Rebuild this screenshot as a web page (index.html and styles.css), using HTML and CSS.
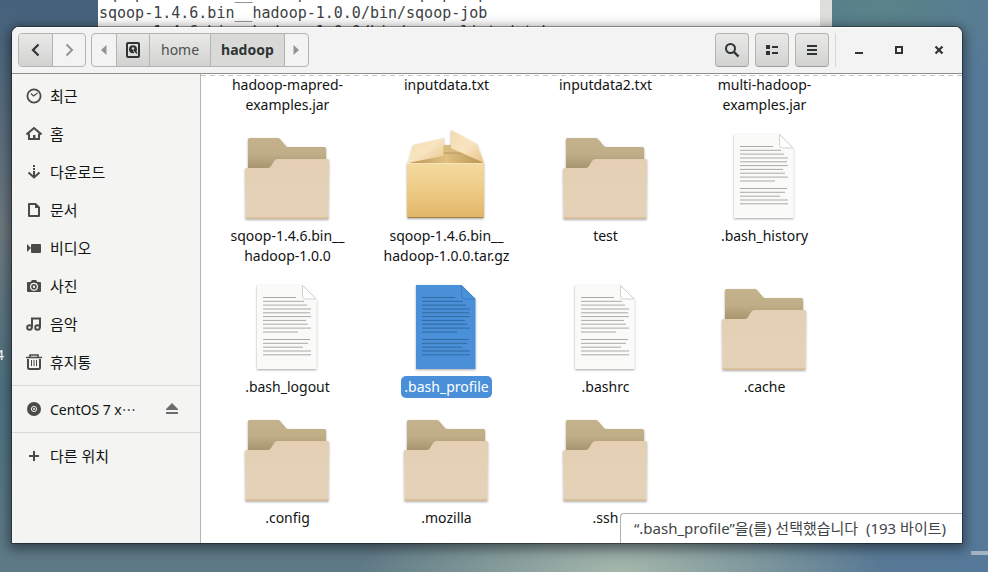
FILE: index.html
```html
<!DOCTYPE html>
<html lang="ko">
<head>
<meta charset="utf-8">
<title>hadoop</title>
<link rel="stylesheet" href="styles.css">
</head>
<body>
<svg class="defs" aria-hidden="true">
  <defs>
    <linearGradient id="back" x1="0" y1="0" x2="0" y2="1"><stop offset="0" stop-color="#c4b28c"/><stop offset=".4" stop-color="#c0ae88"/><stop offset=".8" stop-color="#a5926c"/></linearGradient>
    <linearGradient id="front" x1="0" y1="0" x2="0" y2="1"><stop offset="0" stop-color="#e4cfb4"/><stop offset="1" stop-color="#e4d2b8"/></linearGradient>
    <linearGradient id="box" x1="0" y1="0" x2="0" y2="1"><stop offset="0" stop-color="#f4daa0"/><stop offset=".5" stop-color="#edcb85"/><stop offset="1" stop-color="#e1b569"/></linearGradient>
    <linearGradient id="flap" x1="0" y1="0" x2="1" y2="1"><stop offset="0" stop-color="#f3dcae"/><stop offset=".5" stop-color="#f8e4c0"/><stop offset="1" stop-color="#e8c488"/></linearGradient>
    <linearGradient id="hole" x1="0" y1="0" x2="1" y2="0"><stop offset="0" stop-color="#b89455"/><stop offset=".5" stop-color="#dfc080"/><stop offset="1" stop-color="#b89455"/></linearGradient>
    <filter id="soft" x="-10%" y="-10%" width="120%" height="130%"><feDropShadow dx="0" dy="1" stdDeviation="1" flood-opacity=".35"/></filter>
    <symbol id="folder" viewBox="0 0 96 96">
      <g filter="url(#soft)">
        <path d="M9 50V11.500Q9 10 10.500 10H39Q40 10 41 11L47 18Q48 19 49 19H85.500Q87 19 87 20.500V50Z" fill="url(#back)"/>
        <path d="M6 41.500Q6 40 7.500 40H29Q31 40 32 38L35.500 32.500Q36.500 31 38.500 31H88.500Q90 31 90 32.500L89.500 90Q89.500 91 88.500 91H7.500Q6.500 91 6.500 90Z" fill="url(#front)"/>
        <path d="M6.500 89H89.500V90Q89.500 91 88.500 91H7.500Q6.500 91 6.500 90Z" fill="#d9bf9b"/>
      </g>
    </symbol>
    <symbol id="package" viewBox="0 0 96 96">
      <g filter="url(#soft)">
        <path d="M10 36L45 17H67L86 36Z" fill="url(#hole)"/>
        <path d="M46 17H66V25H46Z" fill="#d8bb80"/>
        <path d="M46 25H68" stroke="#b99a5c"/>
        <path d="M9 35H86V89Q86 90 85 90H10Q9 90 9 89Z" fill="url(#box)"/>
        <path d="M9 35.500H86" stroke="#f8e4b4"/>
        <path d="M10 89.500H85" stroke="#a58247"/>
        <path d="M15 17L46 10L45 28L10 35Z" fill="url(#flap)"/>
        <path d="M53 2L79 16L86 35L53 20Z" fill="url(#flap)"/>
      </g>
    </symbol>
    <symbol id="page" viewBox="0 0 96 96">
      <g filter="url(#soft)">
        <path class="sheet" d="M18 6H63.500L77.500 20V90H18Z"/>
      </g>
      <path class="fold" d="M63.500 6.500V17Q63.500 20 66.500 20H77Z"/>
      <g class="ink">
        <path d="M24 18.500H57M24 22.300H65M24 26.100H68M24 30H72M24 33.800H71M24 37.600H72M24 41.400H67M24 45.200H69M24 49.100H72M24 53H59"/>
        <path d="M24 60.500H71M24 64.300H69M24 68.200H64M24 72H72M24 75.800H72"/>
      </g>
    </symbol>
  </defs>
</svg>

<pre class="terminal" aria-hidden="true">sqoop-1.4.6.bin__hadoop-1.0.0/bin/sqoop-import
sqoop-1.4.6.bin__hadoop-1.0.0/bin/sqoop-job
sqoop-1.4.6.bin__hadoop-1.0.0/bin/sqoop-list-databases</pre>
<span class="desk-label">4</span>
<span class="desk-mark"></span>

<main class="window">
  <header class="bar">
    <div class="group nav">
      <button class="btn raised" aria-label="뒤로"><svg width="16" height="16" viewBox="0 0 16 16"><path d="M10.500 2.500L5 8L10.500 13.500" fill="none" stroke="#2e3436" stroke-width="2.200"/></svg></button>
      <button class="btn" aria-label="앞으로"><svg width="16" height="16" viewBox="0 0 16 16"><path d="M5.500 2.500L11 8L5.500 13.500" fill="none" stroke="#929595" stroke-width="2"/></svg></button>
    </div>
    <div class="group path">
      <button class="btn arrow" aria-label="이전 경로"><svg width="8" height="12" viewBox="0 0 8 12"><path d="M6.500 1V11L1 6Z" fill="#929595"/></svg></button>
      <button class="btn raised disk" aria-label="컴퓨터"><svg width="16" height="16" viewBox="0 0 16 16"><rect x="2" y="1" width="12" height="14" rx="1" fill="none" stroke="#2e3436" stroke-width="2"/><circle cx="8" cy="7.200" r="4" fill="#2e3436"/><circle cx="8" cy="6.500" r="1.200" fill="#e0e0de"/><path d="M8.500 8.500L11 11.500" stroke="#e0e0de" stroke-width="1.200"/><path d="M9 8L12 11.500" stroke="#2e3436" stroke-width="1.200"/></svg></button>
      <button class="btn raised crumb">home</button>
      <button class="btn crumb current">hadoop</button>
      <button class="btn arrow" aria-label="다음 경로"><svg width="8" height="12" viewBox="0 0 8 12"><path d="M1.500 1V11L7 6Z" fill="#929595"/></svg></button>
    </div>
    <div class="tools">
      <button class="btn raised solo" aria-label="검색"><svg width="16" height="16" viewBox="0 0 16 16"><circle cx="6.500" cy="6.500" r="4.500" fill="none" stroke="#2e3436" stroke-width="2"/><path d="M10 10L14.500 14.500" stroke="#2e3436" stroke-width="2.400"/></svg></button>
      <button class="btn raised solo" aria-label="목록 보기"><svg width="16" height="16" viewBox="0 0 16 16"><path d="M2 3H6V7H2ZM8 4H14V6H8ZM2 9H6V13H2ZM8 10H14V12H8Z" fill="#2e3436"/></svg></button>
      <button class="btn raised solo" aria-label="메뉴"><svg width="16" height="16" viewBox="0 0 16 16"><path d="M3 3H13V5H3ZM3 7H13V9H3ZM3 11H13V13H3Z" fill="#2e3436"/></svg></button>
    </div>
    <div class="controls">
      <button class="ctl" aria-label="최소화"><svg width="16" height="16" viewBox="0 0 16 16"><path d="M4 10H12V12H4Z" fill="#2e3436"/></svg></button>
      <button class="ctl" aria-label="최대화"><svg width="16" height="16" viewBox="0 0 16 16"><path d="M5 5H11V11H5Z" fill="none" stroke="#2e3436" stroke-width="2"/></svg></button>
      <button class="ctl" aria-label="닫기"><svg width="16" height="16" viewBox="0 0 16 16"><path d="M4.500 4.500L11.500 11.500M11.500 4.500L4.500 11.500" stroke="#2e3436" stroke-width="2.200"/></svg></button>
    </div>
  </header>

  <div class="body">
    <nav class="side">
      <ul>
        <li><a href="#"><svg width="16" height="16" viewBox="0 0 16 16"><circle cx="8" cy="8" r="6.600" fill="none" stroke="#4a4a48" stroke-width="1.800"/><path d="M5 5.500L7.500 8L11.500 5" fill="none" stroke="#4a4a48" stroke-width="1.200"/></svg>최근</a></li>
        <li><a href="#"><svg width="16" height="16" viewBox="0 0 16 16"><path d="M.5 8.500L8 2L15.500 8.500" fill="none" stroke="#4a4a48" stroke-width="2"/><path d="M3 7.500V13H13V7.500" fill="none" stroke="#4a4a48" stroke-width="2"/><path d="M7 9H9.500V13H7Z" fill="#4a4a48"/></svg>홈</a></li>
        <li><a href="#"><svg width="16" height="16" viewBox="0 0 16 16"><path d="M7 1H9V3H7ZM7 4H9V6H7ZM7 7H9V13H7Z" fill="#4a4a48"/><path d="M2.500 8.500L8 13.500L13.500 8.500" fill="none" stroke="#4a4a48" stroke-width="2"/></svg>다운로드</a></li>
        <li><a href="#"><svg width="16" height="16" viewBox="0 0 16 16"><path d="M3 2H9.500L13 5.500V14H3Z" fill="none" stroke="#4a4a48" stroke-width="2" stroke-linejoin="round"/><path d="M9 2V6H13Z" fill="#4a4a48"/></svg>문서</a></li>
        <li><a href="#"><svg width="16" height="16" viewBox="0 0 16 16"><path d="M1 4L5 8L1 12Z" fill="#4a4a48"/><rect x="5" y="4" width="10" height="9" rx="1" fill="#4a4a48"/></svg>비디오</a></li>
        <li><a href="#"><svg width="16" height="16" viewBox="0 0 16 16"><path fill-rule="evenodd" d="M2 4H4.500L6 2H10L11.500 4H14Q15 4 15 5V13Q15 14 14 14H2Q1 14 1 13V5Q1 4 2 4ZM8 4.800A4 4 0 1 0 8 12.800A4 4 0 1 0 8 4.800Z" fill="#4a4a48"/><circle cx="8" cy="8.800" r="2" fill="none" stroke="#4a4a48" stroke-width="1.600"/></svg>사진</a></li>
        <li><a href="#"><svg width="16" height="16" viewBox="0 0 16 16"><g fill="none" stroke="#4a4a48" stroke-width="2"><circle cx="3.500" cy="11.500" r="2.300"/><circle cx="11.500" cy="11.500" r="2.300"/><path d="M6 11.500V2.500H14V11.500"/></g></svg>음악</a></li>
        <li><a href="#"><svg width="16" height="16" viewBox="0 0 16 16"><path d="M2 5V13.500Q2 15 3.500 15H12.500Q14 15 14 13.500V5" fill="none" stroke="#4a4a48" stroke-width="2"/><path d="M0 3.500H16M4 3V1H12V3" fill="none" stroke="#4a4a48" stroke-width="1.600"/><path d="M5.500 6V12M8 6V12M10.500 6V12" stroke="#4a4a48"/></svg>휴지통</a></li>
      </ul>
      <ul>
        <li class="drive"><a href="#"><svg width="16" height="16" viewBox="0 0 16 16"><circle cx="8" cy="8" r="7" fill="#4a4a48"/><circle cx="8" cy="8" r="2.600" fill="none" stroke="#f4f4f2"/><circle cx="8" cy="8" r="1" fill="#f4f4f2"/></svg><span>CentOS 7 x<span class="dots">⋯</span></span></a><button class="eject" aria-label="꺼내기"><svg width="16" height="16" viewBox="0 0 16 16"><path d="M8 2L14 8V9H2V8ZM2 11H14V13H2Z" fill="#6c6e6e"/></svg></button></li>
      </ul>
      <ul>
        <li><a href="#"><svg width="16" height="16" viewBox="0 0 16 16"><path d="M7 3H9V7H13V9H9V13H7V9H3V7H7Z" fill="#4a4a48"/></svg>다른 위치</a></li>
      </ul>
    </nav>

    <section class="files">
      <ul class="grid">
        <li><span class="name">hadoop-mapred-<br>examples.jar</span></li>
        <li><span class="name">inputdata.txt</span></li>
        <li><span class="name">inputdata2.txt</span></li>
        <li><span class="name">multi-hadoop-<br>examples.jar</span></li>
        <li><svg class="icon"><use href="#folder"/></svg><span class="name">sqoop-1.4.6.bin__<br>hadoop-1.0.0</span></li>
        <li><svg class="icon"><use href="#package"/></svg><span class="name">sqoop-1.4.6.bin__<br>hadoop-1.0.0.tar.gz</span></li>
        <li><svg class="icon"><use href="#folder"/></svg><span class="name">test</span></li>
        <li><svg class="icon"><use href="#page"/></svg><span class="name">.bash_history</span></li>
        <li><svg class="icon"><use href="#page"/></svg><span class="name">.bash_logout</span></li>
        <li class="selected"><svg class="icon"><use href="#page"/></svg><span class="name">.bash_profile</span></li>
        <li><svg class="icon"><use href="#page"/></svg><span class="name">.bashrc</span></li>
        <li><svg class="icon"><use href="#folder"/></svg><span class="name">.cache</span></li>
        <li><svg class="icon"><use href="#folder"/></svg><span class="name">.config</span></li>
        <li><svg class="icon"><use href="#folder"/></svg><span class="name">.mozilla</span></li>
        <li><svg class="icon"><use href="#folder"/></svg><span class="name">.ssh</span></li>
      </ul>
      <div class="status">“.bash_profile”을(를) 선택했습니다&nbsp; (193 바이트)</div>
    </section>
  </div>
</main>
</body>
</html>
```
FILE: styles.css
```css
* { box-sizing: border-box; }

body {
  margin: 0;
  height: 100vh;
  padding: 27px 26px 29px 12px;
  position: relative;
  overflow: hidden;
  font: 14px/20px "Noto Sans", "Noto Sans CJK KR", sans-serif;
  color: #111313;
  background:
    radial-gradient(ellipse 260px 90px at 620px 572px, #a6b8ac, transparent),
    radial-gradient(ellipse 160px 100px at 880px 0, #5a8488, transparent),
    linear-gradient(90deg, transparent 50%, #56799a 100%),
    linear-gradient(180deg, #44617c 0, #6d7880 40%, #4d7282 68%, #5f7a86 100%);
}

ul { list-style: none; margin: 0; padding: 0; }
button { font: inherit; color: inherit; margin: 0; padding: 0; border: 0; background: none; }
svg { display: block; flex: none; }
.defs { position: absolute; width: 0; height: 0; }

.terminal {
  position: absolute;
  left: 98px;
  top: -15px;
  width: 734px;
  height: 60px;
  margin: 0;
  padding-left: 1px;
  overflow: hidden;
  font: 15px/19px "DejaVu Sans Mono", monospace;
  color: #3c4244;
  background: #fff;
  border-right: 12px solid #dededc;
}

.desk-label { position: absolute; left: -4px; top: 345px; color: #fff; }
.desk-mark { position: absolute; right: 0; bottom: 17px; width: 17px; height: 4px; background: #a3b3c2; }

.window {
  position: relative;
  height: 100%;
  display: flex;
  flex-direction: column;
  border-radius: 7px 7px 0 0;
  overflow: hidden;
  background: #fff;
  box-shadow: 0 0 0 1px rgba(0, 0, 0, .35), 0 3px 12px 3px rgba(0, 0, 0, .45);
}

.bar {
  display: flex;
  align-items: center;
  height: 47px;
  flex: none;
  padding: 0 3px 1px 6px;
  background: #f3f3f3;
  border-bottom: 1px solid #8f8f88;
  box-shadow: inset 0 1px #fff;
}

.group { display: flex; height: 34px; border: 1px solid #b4b4b0; border-radius: 4px; overflow: hidden; }
.nav { margin-right: 5px; }
.btn { display: flex; align-items: center; justify-content: center; color: #4c5052; }
.btn + .btn { border-left: 1px solid #b4b4b0; }
.nav .btn { width: 33px; }
.raised { background: linear-gradient(#e9e9e8, #d2d2d0); }
.arrow { width: 24px; }
.disk { width: 33px; }
.crumb { padding: 0 11px; }
.current { background: #d9d9d7; color: #2e3436; font-weight: 700; }
.group .current { padding: 0 10px; }

.tools { display: flex; gap: 6px; margin-left: auto; }
.tools .solo { width: 34px; height: 34px; border: 1px solid #b4b4b0; border-bottom-color: #a0a09a; border-radius: 4px; }
.controls { display: flex; margin-left: 6px; padding-left: 3px; border-left: 1px solid #d6d6d4; height: 34px; }
.ctl { width: 40px; display: flex; align-items: center; justify-content: center; }

.body { display: flex; flex: 1; min-height: 0; }

.side { width: 189px; flex: none; background: #f4f4f2; border-right: 1px solid #b4b4b0; font-size: 15px; }
.side ul { padding: 4px 0; }
.side ul:first-child { padding-top: 3px; }
.side ul + ul { border-top: 1px solid #d8d8d6; }
.side li { display: flex; align-items: center; height: 38px; padding: 0 20px 0 14px; }
.side .drive { font-size: 14px; }
.side a { display: flex; align-items: center; gap: 8px; flex: 1; color: inherit; text-decoration: none; }
.dots { font-family: "Noto Sans CJK KR", sans-serif; }

.files { flex: 1; min-width: 0; position: relative; overflow: hidden; }
.files::before {
  content: "";
  position: absolute;
  inset: 1px 0 auto 0;
  height: 1px;
  background: repeating-linear-gradient(90deg, #c8c8c6 0 5px, transparent 5px 9px);
}
.grid { display: grid; grid-template-columns: repeat(auto-fill, 159px); row-gap: 13px; padding: 1px 0 0 7px; }
.grid li { display: flex; flex-direction: column; align-items: center; text-align: center; }
.icon { width: 96px; height: 96px; margin: 0 1px 1px 0; }
.name { padding: 1px 3px; margin-bottom: -1px; border-radius: 5px; }
.name:first-child { padding-top: 0; }

.icon { --sheet: #fafaf9; --fold: #fff; --edge: #d2d2d0; --ink: #a9a9a7; }
.selected .icon { --sheet: #4a90d9; --fold: #4a90d9; --edge: #3f7dbe; --ink: #33699f; }
.sheet { fill: var(--sheet); }
.fold { fill: var(--fold); stroke: var(--edge); stroke-width: 1px; }
.ink { fill: none; stroke: var(--ink); stroke-width: 1px; }
.selected .name { background: #4a90d9; color: #fff; }

.status {
  position: absolute;
  right: 0;
  bottom: 0;
  padding: 4px 16px 5px 13px;
  font-size: 15px;
  background: #fff;
  color: #3f4547;
  border: 1px solid #b0b0ae;
  border-width: 1px 0 0 1px;
  border-top-left-radius: 4px;
}
```
